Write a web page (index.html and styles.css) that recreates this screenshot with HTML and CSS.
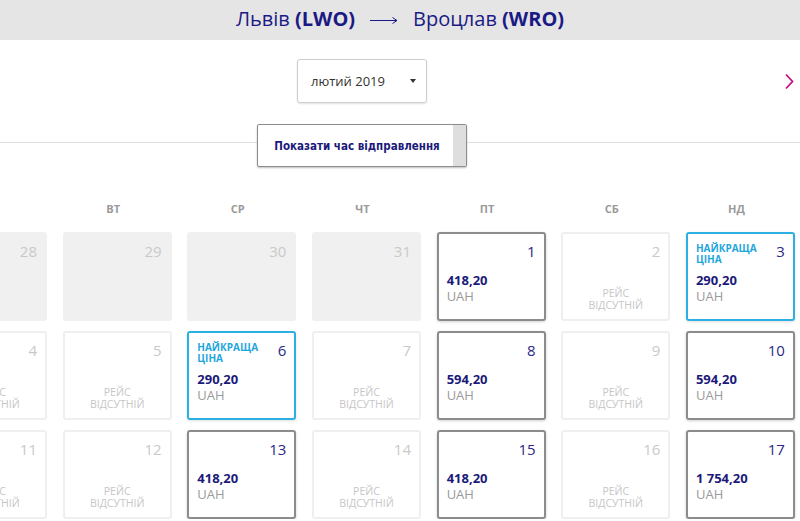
FILE: index.html
```html
<!DOCTYPE html>
<html lang="uk">
<head>
<meta charset="utf-8">
<title>Львів — Вроцлав</title>
<link rel="stylesheet" href="styles.css">
</head>
<body>
<header class="route">
  <span class="city">Львів <b>(LWO)</b></span>
  <svg class="route-arrow" width="28" height="8" viewBox="0 0 28 8"><path d="M0 4.5H27M22.5 1.5L27 4.5L22.5 7.5" fill="none" stroke="#1b1a85" stroke-width="1"/></svg>
  <span class="city">Вроцлав <b>(WRO)</b></span>
</header>

<div class="controls">
  <div class="month-select">
    <span>лютий 2019</span>
    <span class="caret"></span>
  </div>
  <div class="spacer"></div>
  <svg class="next" width="9" height="17" viewBox="0 0 9 17"><path d="M1 1.5L7.5 8.5L1 15.5" fill="none" stroke="#c4117f" stroke-width="1.8"/></svg>
</div>

<div class="toggle-row">
  <div class="rule"></div>
  <button class="toggle"><span class="toggle-text">Показати час відправлення</span><span class="toggle-stripe"></span></button>
  <div class="rule"></div>
</div>

<div class="calendar">
  <div class="weekdays">
    <div>ПН</div><div>ВТ</div><div>СР</div><div>ЧТ</div><div>ПТ</div><div>СБ</div><div>НД</div>
  </div>
  <div class="days">
    <div class="day past"><div class="top"><span class="num">28</span></div></div>
    <div class="day past"><div class="top"><span class="num">29</span></div></div>
    <div class="day past"><div class="top"><span class="num">30</span></div></div>
    <div class="day past"><div class="top"><span class="num">31</span></div></div>
    <div class="day avail"><div class="top"><span class="num">1</span></div><div class="price"><b>418,20</b><span>UAH</span></div></div>
    <div class="day none"><div class="top"><span class="num">2</span></div><div class="missing">РЕЙС<br>ВІДСУТНІЙ</div></div>
    <div class="day best"><div class="top"><span class="label">НАЙКРАЩА<br>ЦІНА</span><span class="num">3</span></div><div class="price"><b>290,20</b><span>UAH</span></div></div>

    <div class="day none"><div class="top"><span class="num">4</span></div><div class="missing">РЕЙС<br>ВІДСУТНІЙ</div></div>
    <div class="day none"><div class="top"><span class="num">5</span></div><div class="missing">РЕЙС<br>ВІДСУТНІЙ</div></div>
    <div class="day best"><div class="top"><span class="label">НАЙКРАЩА<br>ЦІНА</span><span class="num">6</span></div><div class="price"><b>290,20</b><span>UAH</span></div></div>
    <div class="day none"><div class="top"><span class="num">7</span></div><div class="missing">РЕЙС<br>ВІДСУТНІЙ</div></div>
    <div class="day avail"><div class="top"><span class="num">8</span></div><div class="price"><b>594,20</b><span>UAH</span></div></div>
    <div class="day none"><div class="top"><span class="num">9</span></div><div class="missing">РЕЙС<br>ВІДСУТНІЙ</div></div>
    <div class="day avail"><div class="top"><span class="num">10</span></div><div class="price"><b>594,20</b><span>UAH</span></div></div>

    <div class="day none"><div class="top"><span class="num">11</span></div><div class="missing">РЕЙС<br>ВІДСУТНІЙ</div></div>
    <div class="day none"><div class="top"><span class="num">12</span></div><div class="missing">РЕЙС<br>ВІДСУТНІЙ</div></div>
    <div class="day avail"><div class="top"><span class="num">13</span></div><div class="price"><b>418,20</b><span>UAH</span></div></div>
    <div class="day none"><div class="top"><span class="num">14</span></div><div class="missing">РЕЙС<br>ВІДСУТНІЙ</div></div>
    <div class="day avail"><div class="top"><span class="num">15</span></div><div class="price"><b>418,20</b><span>UAH</span></div></div>
    <div class="day none"><div class="top"><span class="num">16</span></div><div class="missing">РЕЙС<br>ВІДСУТНІЙ</div></div>
    <div class="day avail"><div class="top"><span class="num">17</span></div><div class="price"><b>1 754,20</b><span>UAH</span></div></div>
  </div>
</div>
</body>
</html>
```

FILE: styles.css
```css
* { box-sizing: border-box; }

html, body {
  margin: 0;
  padding: 0;
  background: #fff;
  overflow: hidden;
  font-family: "Open Sans", "Liberation Sans", sans-serif;
}

.route {
  height: 40px;
  background: #e5e5e5;
  display: flex;
  align-items: center;
  justify-content: center;
  gap: 15px;
  color: #1b1a85;
  font-size: 20px;
  padding-left: 0;
  padding-bottom: 3px;
}
.city b { font-weight: 700; }
.route-arrow { display: block; margin-top: 2px; }

.controls {
  margin-top: 19px;
  display: flex;
  align-items: center;
  padding-left: 297px;
  padding-right: 6px;
}
.month-select {
  width: 130px;
  height: 44px;
  border: 1px solid #cfcfcf;
  border-radius: 3px;
  box-shadow: 0 1px 2px rgba(0,0,0,0.12);
  display: flex;
  align-items: center;
  justify-content: space-between;
  padding: 0 10px 0 13px;
  font-size: 13px;
  color: #333;
}
.caret {
  width: 0;
  height: 0;
  border-left: 3px solid transparent;
  border-right: 3px solid transparent;
  border-top: 4px solid #333;
}
.spacer { flex: 1; }
.next { display: block; }

.toggle-row {
  margin-top: 21px;
  display: grid;
  grid-template-columns: 257px 210px 1fr;
  align-items: start;
}
.rule {
  margin-top: 18px;
  border-top: 1px solid #dedede;
}
.toggle {
  height: 43px;
  padding: 0;
  margin: 0;
  border: 1px solid #8d8d8d;
  border-radius: 2px;
  background: #fff;
  box-shadow: 0 1px 2px rgba(0,0,0,0.25);
  display: flex;
  align-items: stretch;
  font-family: "DejaVu Sans Condensed", "DejaVu Sans", sans-serif;
  font-weight: 700;
  font-size: 11.5px;
  color: #1b1a7a;
}
.toggle-text {
  flex: 1;
  display: flex;
  align-items: center;
  justify-content: center;
  padding-top: 1px;
  padding-left: 3px;
}
.toggle-stripe {
  width: 13px;
  background: #dedede;
}

.calendar {
  margin-left: -62px;
  width: 857px;
}
.weekdays, .days {
  display: grid;
  grid-template-columns: repeat(7, 109px);
  column-gap: 15.67px;
}
.weekdays {
  margin-top: 32px;
  height: 20px;
  line-height: 20px;
  font-size: 11px;
  font-weight: 700;
  color: #9a9a9a;
}
.weekdays div {
  text-align: center;
  padding-right: 8px;
}
.days {
  margin-top: 13px;
  row-gap: 10px;
}

.day {
  height: 89px;
  border: 2px solid #efefef;
  border-radius: 3px;
  display: flex;
  flex-direction: column;
  padding: 8px 8px 15px 8px;
  background: #fff;
}
.top {
  display: flex;
  justify-content: space-between;
  align-items: flex-start;
}
.num {
  margin-left: auto;
  font-size: 15px;
  line-height: 18px;
  color: #2a2985;
}
.past {
  background: #f0f0f0;
  border-color: #f0f0f0;
}
.past .num, .none .num { color: #c9c9c9; }
.avail {
  border-color: #8c8c8c;
  box-shadow: 0 1px 3px rgba(0,0,0,0.18);
}
.best {
  border-color: #2cb0e4;
  box-shadow: 0 1px 3px rgba(0,0,0,0.12);
}
.label {
  font-size: 10px;
  line-height: 11px;
  font-weight: 700;
  color: #1fa6dd;
  margin-top: 1px;
  margin-right: 6px;
}
.price {
  margin-top: auto;
  display: flex;
  flex-direction: column;
  font-size: 13px;
  line-height: 16px;
}
.price b {
  color: #1b1a7a;
  font-weight: 700;
}
.price span { color: #9a9a9a; }
.missing {
  margin-top: auto;
  margin-bottom: -7px;
  text-align: center;
  font-size: 10.5px;
  line-height: 12px;
  color: #c6c6c6;
}
```
